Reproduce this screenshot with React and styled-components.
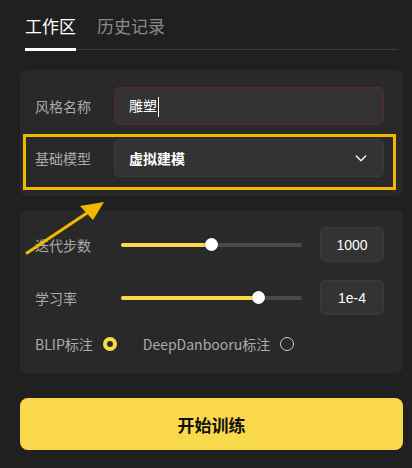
import React from 'react'
import styled, { createGlobalStyle } from 'styled-components'

const GlobalStyle = createGlobalStyle`
html, body {
  margin:0;
  padding:0;
  background:#202020;
  font-family: 'Noto Sans CJK SC', 'Noto Sans', sans-serif;
}
`

const Page = styled.div`
position:relative;
width:412px;
height:468px;
padding:14px 9px 0 20px;
box-sizing:border-box;
background:#202020;
`

const Tabs = styled.div`
display:flex;
margin:0 5px 0 5px;
border-bottom:1px solid #3a3a3a;
`

const Tab = styled.div`
font-size:17px;
line-height:24px;
padding-bottom:10px;
margin-right:21px;
color:${p => (p.active ? '#ffffff' : '#8a8a8a')};
border-bottom:${p => (p.active ? '3px solid #ffffff' : '3px solid transparent')};
margin-bottom:-2px;
`

const Card = styled.div`
background:#292929;
border-radius:8px;
margin-top:${p => p.top}px;
padding:${p => p.pad};
display:flex;
flex-direction:column;
gap:${p => p.gap}px;
`

const Row = styled.div`
display:flex;
align-items:center;
height:${p => p.h}px;
padding:${p => (p.highlight ? '2px 9px 10px 9px' : '0 9px')};
box-sizing:border-box;
border:${p => (p.highlight ? '3px solid #f5b800' : '3px solid transparent')};
margin:0 7px 0 3px;
`

const Label = styled.div`
width:79px;
font-size:14px;
color:#aaaaaa;
flex-shrink:0;
`

const Field = styled.div`
flex:1;
height:38px;
box-sizing:border-box;
background:#333333;
border:1px solid ${p => (p.error ? '#582a2a' : '#3a3a3a')};
border-radius:5px;
display:flex;
align-items:center;
justify-content:space-between;
padding:0 14px 0 14px;
color:#ffffff;
font-size:14px;
font-weight:${p => (p.bold ? 700 : 400)};
`

const Caret = styled.span`
display:inline-block;
width:1px;
height:20px;
background:#ffffff;
margin-left:1px;
vertical-align:middle;
`

const SliderRow = styled.div`
display:flex;
align-items:center;
height:35px;
`

const SliderLabel = styled.div`
width:86px;
font-size:14px;
color:#aaaaaa;
`

const Track = styled.div`
position:relative;
width:181px;
height:4px;
border-radius:2px;
background:#4a4a4a;
`

const Fill = styled.div`
height:100%;
border-radius:2px;
background:#f9d84a;
`

const Thumb = styled.div`
position:absolute;
top:50%;
width:13px;
height:13px;
margin:-6.5px 0 0 -6.5px;
border-radius:50%;
background:#ffffff;
box-shadow:0 0 2px rgba(0,0,0,0.4);
`

const ValueBox = styled.div`
margin-left:auto;
width:64px;
height:35px;
box-sizing:border-box;
background:#333333;
border:1px solid #3a3a3a;
border-radius:5px;
display:flex;
align-items:center;
justify-content:center;
color:#ffffff;
font-family:'Liberation Sans', 'Noto Sans', sans-serif;
font-size:14px;
`

const RadioRow = styled.div`
display:flex;
align-items:center;
height:20px;
font-size:14px;
color:#aaaaaa;
margin-top:1px;
`

const RadioItem = styled.label`
display:flex;
align-items:center;
gap:10px;
margin-right:${p => p.mr}px;
`

const Radio = styled.span`
box-sizing:border-box;
width:14px;
height:14px;
border-radius:50%;
border:${p => (p.checked ? '4px solid #f9d84a' : '1.5px solid #cccccc')};
background:${p => (p.checked ? '#292929' : 'transparent')};
`

const StartButton = styled.button`
display:block;
width:100%;
height:52px;
margin-top:25px;
border:none;
border-radius:8px;
background:#f9d84a;
color:#111111;
font-family:'Noto Sans CJK SC', sans-serif;
font-size:17px;
font-weight:700;
`

const Arrow = styled.svg`
position:absolute;
left:22px;
top:195px;
`

const sliders = [
  { label: '迭代步数', pct: 50, value: '1000' },
  { label: '学习率', pct: 76, value: '1e-4' },
]

export default function App() {
  return (
    <Page>
      <GlobalStyle />
      <Tabs>
        <Tab active>工作区</Tab>
        <Tab>历史记录</Tab>
      </Tabs>

      <Card top={20} pad="14px 0 6px 0" gap={6}>
        <Row h={44}>
          <Label>风格名称</Label>
          <Field error>
            <span>雕塑<Caret /></span>
          </Field>
        </Row>
        <Row h={56} highlight>
          <Label>基础模型</Label>
          <Field bold>
            <span>虚拟建模</span>
            <svg width="16" height="16" viewBox="0 0 24 24" fill="none" stroke="#ffffff" strokeWidth="2" strokeLinecap="round" strokeLinejoin="round">
              <path d="M5 9l7 7 7-7" />
            </svg>
          </Field>
        </Row>
      </Card>

      <Card top={14} pad="17px 19px 19px 15px" gap={18}>
        {sliders.map(s => (
          <SliderRow key={s.label}>
            <SliderLabel>{s.label}</SliderLabel>
            <Track>
              <Fill style={{ width: s.pct + '%' }} />
              <Thumb style={{ left: s.pct + '%' }} />
            </Track>
            <ValueBox>{s.value}</ValueBox>
          </SliderRow>
        ))}
        <RadioRow>
          <RadioItem mr={26}>BLIP标注<Radio checked /></RadioItem>
          <RadioItem mr={0}>DeepDanbooru标注<Radio /></RadioItem>
        </RadioRow>
      </Card>

      <StartButton>开始训练</StartButton>

      <Arrow width="90" height="64" viewBox="0 0 90 64">
        <path d="M5 58 L68 16" stroke="#f5b800" strokeWidth="3" strokeLinecap="round" />
        <path d="M82 7 L58 11 L71 25 Z" fill="#f5b800" />
      </Arrow>
    </Page>
  )
}
